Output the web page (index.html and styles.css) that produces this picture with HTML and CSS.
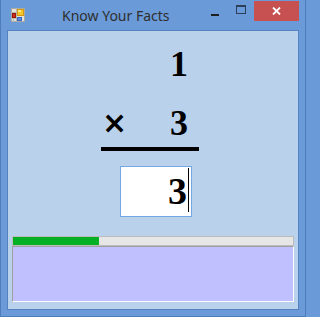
FILE: index.html
```html
<!DOCTYPE html>
<html>
<head>
<meta charset="utf-8">
<link rel="stylesheet" href="styles.css">
</head>
<body>
<div class="window">
  <div class="titlebar">
    <svg class="app-icon" width="14" height="14" viewBox="0 0 14 14">
      <rect x="0.5" y="0.5" width="13" height="13" fill="#e4e4dc" stroke="#a9a9a0"/>
      <line x1="5.5" y1="0" x2="5.5" y2="14" stroke="#b8b8b0"/>
      <line x1="0" y1="4.5" x2="14" y2="4.5" stroke="#b8b8b0"/>
      <line x1="0" y1="10.5" x2="6" y2="10.5" stroke="#b8b8b0"/>
      <line x1="2.5" y1="10" x2="2.5" y2="14" stroke="#b8b8b0"/>
      <rect x="1.5" y="5.5" width="3" height="4" fill="#d42a1e" stroke="#9a1510"/>
      <rect x="6.5" y="1.5" width="6" height="6" fill="#f6c72a" stroke="#d39a0c"/>
      <rect x="7" y="2" width="3" height="2" fill="#fde88a"/>
      <rect x="6.5" y="9.5" width="4" height="3" fill="#5b8de6" stroke="#3b66c0"/>
    </svg>
    <span class="title">Know Your Facts</span>
    <div class="spacer"></div>
    <div class="cbtn min"><span class="dash"></span></div>
    <div class="cbtn max"><span class="box"></span></div>
    <div class="cbtn close">
      <svg width="9" height="8" viewBox="0 0 9 8">
        <path d="M1 0.5 L8 7.5 M8 0.5 L1 7.5" stroke="#fff" stroke-width="1.8" fill="none"/>
      </svg>
    </div>
  </div>
  <div class="client">
    <div class="sum">
      <div class="row row1"><span class="digit">1</span></div>
      <div class="row row2"><span class="times">×</span><span class="digit">3</span></div>
      <div class="rule"></div>
      <div class="answer"><span class="ans-digit">3</span><span class="caret"></span></div>
    </div>
    <div class="progress"><div class="fill" style="width:86px"></div></div>
    <div class="panel"></div>
  </div>
</div>
</body>
</html>
```

FILE: styles.css
```css
html, body {
  margin: 0;
  padding: 0;
}
body {
  width: 306px;
  height: 317px;
  overflow: hidden;
  background: #6a9ad8;
}
.window {
  box-sizing: border-box;
  width: 306px;
  height: 317px;
  background: #6a9ad8;
  border: 1px solid #4f7db9;
  border-top: none;
  padding: 0 6px 6px 6px;
  display: flex;
  flex-direction: column;
}
.titlebar {
  height: 30px;
  display: flex;
  align-items: flex-start;
}
.app-icon {
  margin-left: 4px;
  margin-top: 8px;
  flex: none;
}
.title {
  margin-left: 37px;
  font-family: "Noto Sans", "Open Sans", sans-serif;
  font-size: 14px;
  line-height: 31px;
  color: #2f2f2f;
  white-space: nowrap;
}
.spacer {
  flex: 1;
}
.cbtn {
  height: 20px;
  margin-top: 1px;
  display: flex;
  align-items: center;
  justify-content: center;
  flex: none;
}
.cbtn.min {
  width: 27px;
}
.cbtn.max {
  width: 26px;
}
.cbtn.close {
  width: 45px;
  background: #c75050;
}
.dash {
  display: block;
  width: 8px;
  height: 2px;
  background: #1e1e1e;
  margin-top: 7px;
}
.box {
  display: block;
  box-sizing: border-box;
  width: 10px;
  height: 9px;
  border: 1px solid #2c3e58;
  border-top-width: 2px;
  margin-top: -4px;
}
.client {
  flex: 1;
  box-sizing: border-box;
  background: #b9d1ea;
  border: 1px solid #5583c1;
  display: flex;
  flex-direction: column;
}
.sum {
  width: 98px;
  margin-left: 93px;
  display: flex;
  flex-direction: column;
}
.row {
  height: 36px;
  font-family: "Liberation Serif", "Times New Roman", serif;
  font-weight: bold;
  font-size: 36px;
  line-height: 36px;
  color: #000;
}
.row1 {
  margin-top: 15px;
  text-align: right;
  padding-right: 11px;
}
.row2 {
  margin-top: 23px;
  display: flex;
  justify-content: space-between;
  padding-right: 11px;
}
.times {
  font-family: "DejaVu Sans", sans-serif;
  font-size: 30px;
  margin-left: 1px;
}
.rule {
  margin-top: 6px;
  height: 4px;
  background: #000;
}
.answer {
  margin-top: 15px;
  margin-left: 19px;
  box-sizing: border-box;
  width: 72px;
  height: 51px;
  border: 1px solid #72a8e4;
  background: #fff;
  display: flex;
  justify-content: flex-end;
  align-items: flex-start;
  padding-right: 2px;
}
.ans-digit {
  font-family: "Liberation Serif", "Times New Roman", serif;
  font-weight: bold;
  font-size: 38px;
  line-height: 44px;
  margin-top: 2px;
  color: #000;
}
.caret {
  width: 1px;
  height: 44px;
  background: #000;
  margin-top: 1px;
  margin-left: 1px;
}
.progress {
  margin: 19px 4px 0 4px;
  box-sizing: border-box;
  height: 10px;
  border: 1px solid #bcbcbc;
  background: #e6e6e6;
}
.fill {
  height: 100%;
  background: #06b025;
}
.panel {
  margin: 0 4px;
  box-sizing: border-box;
  height: 56px;
  background: #c0c0ff;
  border: 1px solid;
  border-color: #a0a0a0 #ffffff #ffffff #a0a0a0;
}
```
